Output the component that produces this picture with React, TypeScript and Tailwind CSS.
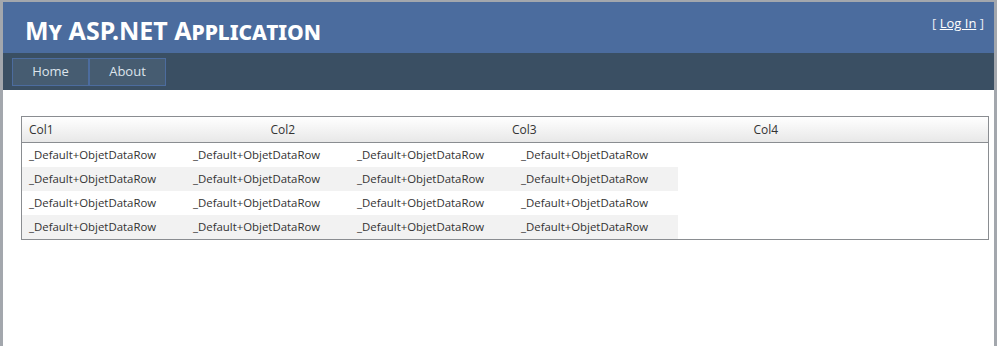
const rows = [0, 1, 2, 3];
const cols = ["Col1", "Col2", "Col3", "Col4"];

export default function App() {
  return (
    <div className="h-[346px] w-[997px] overflow-hidden border-t-2 border-l-[3px] border-r-[3px] border-[#a3a7ad] bg-white font-['Open_Sans',sans-serif]">
      <div className="flex h-[51px] items-start justify-between bg-[#4b6c9e] pl-[22px] pr-[10px]">
        <h1 className="pt-[11px] text-[25px] font-bold leading-[34px] text-white [font-variant:small-caps] font-['Noto_Sans',sans-serif]">
          My ASP.NET Application
        </h1>
        <div className="pt-[12px] text-[13px] text-[#e6ebf2]">
          [ <a className="underline text-white">Log In</a> ]
        </div>
      </div>
      <div className="h-[37px] bg-[#3a4f63] pl-[9px] pt-[5px]">
        <ul className="flex">
          {["Home", "About"].map((m) => (
            <li key={m}>
              <a className="flex h-[28px] w-[77px] items-center justify-center border border-[#4c6c9e] bg-[#465c71] text-[13px] text-[#dde4ec]">
                {m}
              </a>
            </li>
          ))}
        </ul>
      </div>
      <div className="pl-[18px] pr-[5px] pt-[26px]">
        <div className="border border-[#8a8d91]">
          <div className="grid h-[26px] grid-cols-4 border-b border-[#8a8d91] bg-gradient-to-b from-white to-[#e8e8e8] text-[12px] text-[#333]">
            {cols.map((c) => (
              <div key={c} className="flex items-center px-[7px]">
                {c}
              </div>
            ))}
          </div>
          <div className="flex flex-col">
            {rows.map((r) => (
              <div
                key={r}
                className={`flex h-[24px] w-fit ${r % 2 === 1 ? "bg-[#f2f2f2]" : ""}`}
              >
                {cols.map((c) => (
                  <div key={c} className="flex w-[164px] items-center px-[7px] text-[11.4px] text-[#333]">
                    _Default+ObjetDataRow
                  </div>
                ))}
              </div>
            ))}
          </div>
        </div>
      </div>
    </div>
  );
}
